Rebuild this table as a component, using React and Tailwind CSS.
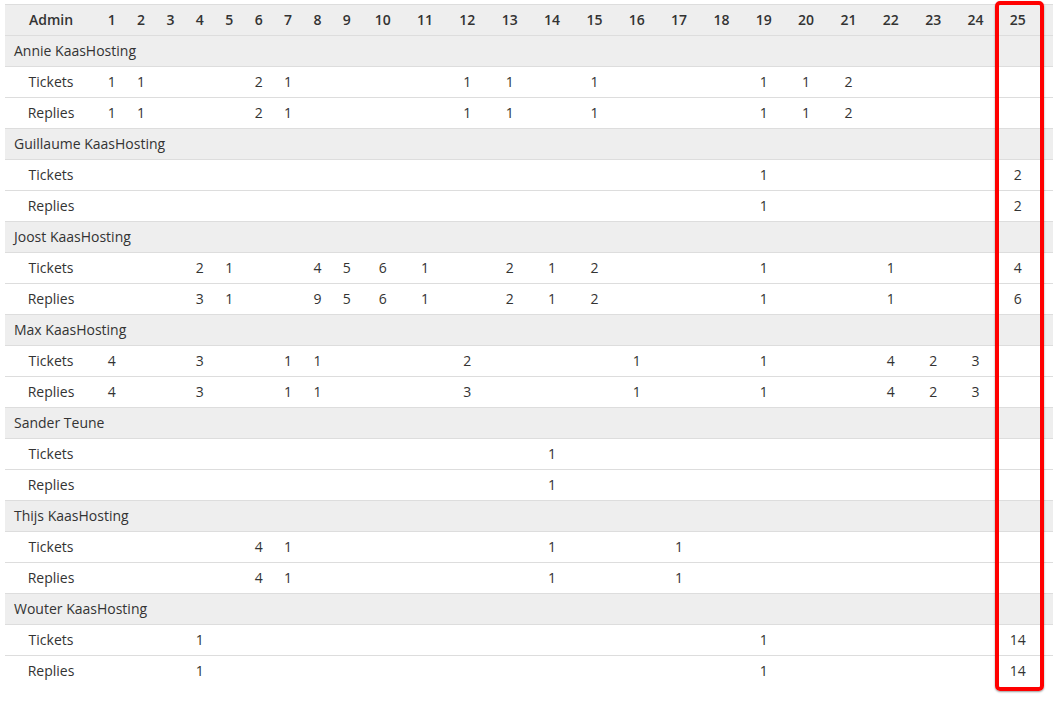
import React from 'react';

const days = Array.from({ length: 25 }, (_, i) => i + 1);

const admins = [
  {
    name: 'Annie KaasHosting',
    tickets: { 1: 1, 2: 1, 6: 2, 7: 1, 12: 1, 13: 1, 15: 1, 19: 1, 20: 1, 21: 2 },
    replies: { 1: 1, 2: 1, 6: 2, 7: 1, 12: 1, 13: 1, 15: 1, 19: 1, 20: 1, 21: 2 },
  },
  {
    name: 'Guillaume KaasHosting',
    tickets: { 19: 1, 25: 2 },
    replies: { 19: 1, 25: 2 },
  },
  {
    name: 'Joost KaasHosting',
    tickets: { 4: 2, 5: 1, 8: 4, 9: 5, 10: 6, 11: 1, 13: 2, 14: 1, 15: 2, 19: 1, 22: 1, 25: 4 },
    replies: { 4: 3, 5: 1, 8: 9, 9: 5, 10: 6, 11: 1, 13: 2, 14: 1, 15: 2, 19: 1, 22: 1, 25: 6 },
  },
  {
    name: 'Max KaasHosting',
    tickets: { 1: 4, 4: 3, 7: 1, 8: 1, 12: 2, 16: 1, 19: 1, 22: 4, 23: 2, 24: 3 },
    replies: { 1: 4, 4: 3, 7: 1, 8: 1, 12: 3, 16: 1, 19: 1, 22: 4, 23: 2, 24: 3 },
  },
  {
    name: 'Sander Teune',
    tickets: { 14: 1 },
    replies: { 14: 1 },
  },
  {
    name: 'Thijs KaasHosting',
    tickets: { 6: 4, 7: 1, 14: 1, 17: 1 },
    replies: { 6: 4, 7: 1, 14: 1, 17: 1 },
  },
  {
    name: 'Wouter KaasHosting',
    tickets: { 4: 1, 19: 1, 25: 14 },
    replies: { 4: 1, 19: 1, 25: 14 },
  },
];

const cell = 'h-[31px] p-0 text-center align-middle';

const StatRow = ({ label, data, last }) => (
  <tr className={last ? '' : 'border-b border-[#dddddd]'}>
    <td className={cell}>{label}</td>
    {days.map((d) => (
      <td key={d} className={cell}>{data[d] ?? ''}</td>
    ))}
    <td className={cell}></td>
  </tr>
);

export default function App() {
  return (
    <div
      className="relative w-[1053px] h-[701px] overflow-hidden bg-white text-[14px] leading-5 text-[#333333]"
      style={{ fontFamily: '"Open Sans", "Liberation Sans", sans-serif' }}
    >
      <div className="pl-[5px] pt-[4px]">
        <table className="table-fixed border-collapse w-[1060px]">
          <colgroup>
            <col className="w-[92px]" />
            {days.map((d) => (
              <col key={d} className={d < 10 ? 'w-[29.4px]' : 'w-[42.35px]'} />
            ))}
            <col />
          </colgroup>
          <thead>
            <tr className="bg-[#eeeeee] border-y border-[#dddddd]">
              <th className={cell + ' font-semibold'}>Admin</th>
              {days.map((d) => (
                <th key={d} className={cell + ' font-semibold'}>{d}</th>
              ))}
              <th className={cell}></th>
            </tr>
          </thead>
          <tbody>
            {admins.map((a, i) => (
              <React.Fragment key={a.name}>
                <tr className="bg-[#eeeeee] border-b border-[#dddddd]">
                  <td colSpan={27} className="h-[31px] p-0 pl-[9px] text-left align-middle">{a.name}</td>
                </tr>
                <StatRow label="Tickets" data={a.tickets} />
                <StatRow label="Replies" data={a.replies} last={i === admins.length - 1} />
              </React.Fragment>
            ))}
          </tbody>
        </table>
      </div>

      {/* highlight around column 25 */}
      <div className="absolute left-[995px] top-[1px] w-[49px] h-[690px] border-4 border-[#ff0000] rounded-[5px] shadow-[0_1px_2px_rgba(0,0,0,0.4)]" />
    </div>
  );
}
